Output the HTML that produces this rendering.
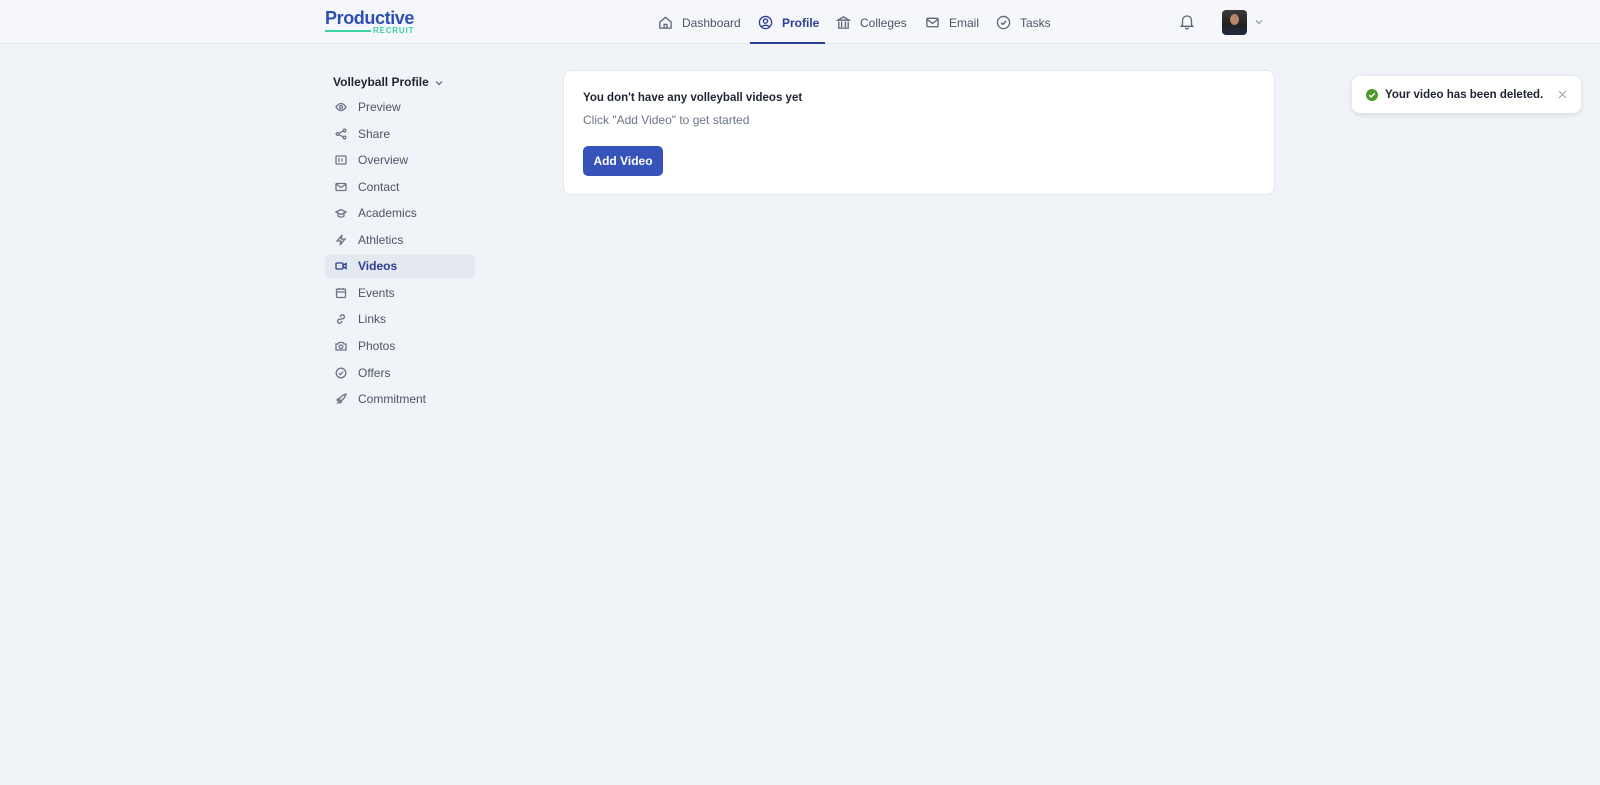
<!DOCTYPE html>
<html><head><meta charset="utf-8"><style>
*{box-sizing:border-box;margin:0;padding:0}
body{width:1600px;height:785px;background:#f0f3f8;font-family:"Liberation Sans",sans-serif;position:relative;overflow:hidden;color:#4b5567}
.hdr{position:absolute;left:0;top:0;width:1600px;height:44px;background:#f5f7fa;border-bottom:1px solid #e3e7ee}
.logo{position:absolute;left:325px;top:8px;font-weight:700;font-size:18px;color:#2d4fb0;letter-spacing:-0.4px}
.logo2{position:absolute;left:373px;top:26px;font-size:8px;font-weight:700;color:#3ad3a0;letter-spacing:.8px}
.logoline{position:absolute;left:325px;top:30px;width:46px;height:2px;background:#3ad3a0}
.nav{position:absolute;top:15px;font-size:12px;color:#4b5567;display:flex;align-items:center;gap:9px;white-space:nowrap}
.nav svg{width:15px;height:15px;fill:none;stroke:#5b6578;stroke-width:1.4}
.act{color:#2b3d94;font-weight:700}
.uline{position:absolute;left:750px;top:42px;width:75px;height:2px;background:#2b3d94}
.side{position:absolute;left:325px;top:0;width:160px}
.it{position:absolute;left:0;display:flex;align-items:center;font-size:12px;color:#4b5567;height:24px;width:150px;padding-left:10px;white-space:nowrap}
.it svg{width:12px;height:12px;fill:none;stroke:#6b7588;stroke-width:1.3;margin-right:11px}
.sel{background:#e4e8ef;border-radius:6px;color:#2b3d94;font-weight:700}
.card{position:absolute;left:563px;top:70px;width:712px;height:125px;background:#fff;border:1px solid #e3e7ee;border-radius:8px}
.btn{position:absolute;left:19px;top:75px;width:80px;height:30px;background:#3553b8;border-radius:5px;color:#fff;font-size:12px;font-weight:700;text-align:center;line-height:30px}
.toast{position:absolute;left:1352px;top:76px;width:229px;height:37px;background:#fff;border-radius:8px;box-shadow:0 2px 6px rgba(0,0,0,.1);font-size:12px;color:#1f2433}
</style></head><body>
<div class="hdr">
<div class="logo">Productive</div><div class="logoline"></div><div class="logo2">RECRUIT</div>
<div class="nav" style="left:658px"><svg viewBox="0 0 16 16"><path d="M2 7.5 8 2.5l6 5V14H2z M6.5 14v-4h3v4"/></svg>Dashboard</div>
<div class="nav act" style="left:758px"><svg viewBox="0 0 16 16" style="stroke:#2b3d94"><circle cx="8" cy="8" r="6.5"/><circle cx="8" cy="6.5" r="2.2"/><path d="M4 12.5c1.5-2 6.5-2 8 0"/></svg>Profile</div>
<div class="nav" style="left:836px"><svg viewBox="0 0 16 16"><path d="M2 5.5 8 2l6 3.5z M3 7v6M6 7v6M10 7v6M13 7v6M2 14h12"/></svg>Colleges</div>
<div class="nav" style="left:925px"><svg viewBox="0 0 16 16"><rect x="2" y="3.5" width="12" height="9" rx="1"/><path d="m2 4.5 6 4.5 6-4.5"/></svg>Email</div>
<div class="nav" style="left:996px"><svg viewBox="0 0 16 16"><circle cx="8" cy="8" r="6.5"/><path d="m5.5 8.2 1.8 1.8 3.3-3.6"/></svg>Tasks</div>
<svg style="position:absolute;left:1179px;top:13px" width="16" height="17" viewBox="0 0 16 17" fill="none" stroke="#5b6578" stroke-width="1.3"><path d="M3.5 12V7.5a4.5 4.5 0 0 1 9 0V12l1.2 1.3H2.3z M6.5 14.5a1.5 1.5 0 0 0 3 0"/></svg>
<div style="position:absolute;left:1222px;top:10px;width:25px;height:25px;border-radius:4px;background:linear-gradient(#3c3a3a,#222 60%,#1e2a44)"><div style="position:absolute;left:8px;top:4px;width:9px;height:11px;border-radius:50%;background:#b98566"></div></div>
<svg style="position:absolute;left:1255px;top:19px" width="8" height="6" viewBox="0 0 8 6" fill="none" stroke="#8a93a4" stroke-width="1.1"><path d="m1 1.5 3 3 3-3"/></svg>
</div>
<div class="uline"></div>
<div class="side">
<div style="position:absolute;left:8px;top:75px;font-size:12px;font-weight:700;color:#1f2433;white-space:nowrap">Volleyball Profile <svg width="8" height="6" viewBox="0 0 8 6" fill="none" stroke="#4b5567" stroke-width="1.1" style="margin-left:3px"><path d="m1 1.5 3 3 3-3"/></svg></div>
<div class="it" style="top:95px"><svg viewBox="0 0 12 12"><path d="M1 6s2-3.5 5-3.5S11 6 11 6 9 9.5 6 9.5 1 6 1 6z"/><circle cx="6" cy="6" r="1.5"/></svg>Preview</div>
<div class="it" style="top:122px"><svg viewBox="0 0 12 12"><circle cx="9.5" cy="2.5" r="1.3"/><circle cx="2.5" cy="6" r="1.3"/><circle cx="9.5" cy="9.5" r="1.3"/><path d="M3.7 5.4 8.3 3.1M3.7 6.6l4.6 2.3"/></svg>Share</div>
<div class="it" style="top:148px"><svg viewBox="0 0 12 12"><rect x="1" y="2" width="10" height="8" rx="1"/><path d="M3 5h2M3 7h2M7 4.5v3"/></svg>Overview</div>
<div class="it" style="top:175px"><svg viewBox="0 0 12 12"><rect x="1" y="2.5" width="10" height="7" rx="1"/><path d="m1 3 5 3.5L11 3"/></svg>Contact</div>
<div class="it" style="top:201px"><svg viewBox="0 0 12 12"><path d="M1 5 6 2.5 11 5 6 7.5z M3 6v3c2 1.5 4 1.5 6 0V6"/></svg>Academics</div>
<div class="it" style="top:228px"><svg viewBox="0 0 12 12"><path d="M7 1 2 7h4l-1 4 5-6H6z"/></svg>Athletics</div>
<div class="it sel" style="top:254px"><svg viewBox="0 0 12 12" style="stroke:#2b3d94"><rect x="1" y="3" width="7" height="6" rx="1"/><path d="m8 5.5 3-2v5l-3-2"/></svg>Videos</div>
<div class="it" style="top:281px"><svg viewBox="0 0 12 12"><rect x="1.5" y="2" width="9" height="8.5" rx="1"/><path d="M1.5 5h9M4 1v2M8 1v2"/></svg>Events</div>
<div class="it" style="top:307px"><svg viewBox="0 0 12 12"><path d="M5 7 7 5M4.5 5.5 3 7a2 2 0 0 0 2.8 2.8l1.5-1.5M7.5 6.5 9 5a2 2 0 0 0-2.8-2.8L4.7 3.7"/></svg>Links</div>
<div class="it" style="top:334px"><svg viewBox="0 0 12 12"><path d="M1 4h2l1-1.5h4L9 4h2v6H1z"/><circle cx="6" cy="6.8" r="1.8"/></svg>Photos</div>
<div class="it" style="top:361px"><svg viewBox="0 0 12 12"><circle cx="6" cy="6" r="4.8"/><path d="m4 6.2 1.4 1.4L8 4.8"/></svg>Offers</div>
<div class="it" style="top:387px"><svg viewBox="0 0 12 12"><path d="M4 8c0-3 3-6 7-7-1 4-4 7-7 7zM4 8l-2-1 2-2M4 8l1 2 2-2M2 10.5l1.5-1.5"/></svg>Commitment</div>
</div>
<div class="card">
<div style="position:absolute;left:19px;top:21px;font-size:11.5px;font-weight:700;color:#1f2433">You don't have any volleyball videos yet</div>
<div style="position:absolute;left:19px;top:42px;font-size:12px;color:#6b7588">Click "Add Video" to get started</div>
<div class="btn">Add Video</div>
</div>
<div class="toast">
<svg style="position:absolute;left:14px;top:13px" width="12" height="12" viewBox="0 0 12 12"><circle cx="6" cy="6" r="6" fill="#4d9a2a"/><path d="m3.3 6.2 1.8 1.8 3.6-3.6" stroke="#fff" stroke-width="1.5" fill="none"/></svg>
<div style="position:absolute;left:33px;top:13px;font-weight:700;font-size:11.5px">Your video has been deleted.</div>
<svg style="position:absolute;left:206px;top:14px" width="9" height="9" viewBox="0 0 9 9" stroke="#9aa2b1" stroke-width="1.1"><path d="m1 1 7 7M8 1 1 8"/></svg>
</div>
</body></html>
